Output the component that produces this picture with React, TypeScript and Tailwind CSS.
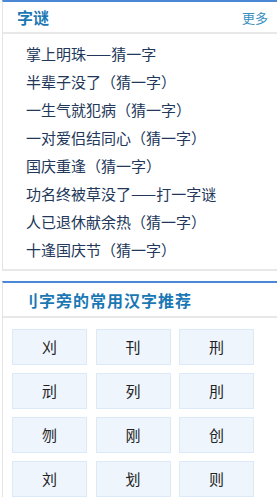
import React from "react";

const riddles = [
  "掌上明珠——猜一字",
  "半辈子没了（猜一字）",
  "一生气就犯病（猜一字）",
  "一对爱侣结同心（猜一字）",
  "国庆重逢（猜一字）",
  "功名终被草没了——打一字谜",
  "人已退休献余热（猜一字）",
  "十逢国庆节（猜一字）",
];

const chars = ["刈", "刊", "刑", "刓", "列", "刖", "刎", "刚", "创", "刘", "划", "则"];

export default function App() {
  return (
    <div
      className="w-[277px] h-[500px] overflow-hidden bg-white pl-[2px]"
      style={{ fontFamily: '"Noto Sans CJK SC", "Noto Sans", sans-serif' }}
    >
      <div className="w-[290px] border-t-2 border-t-[#4a88d6] border-l border-l-[#e3e3e3] border-b-2 border-b-[#e8e8e8]">
        <div className="h-[32px] flex items-center justify-between pl-[14px] pr-[24px] border-b-2 border-[#e8e8e8]">
          <span className="text-[16px] font-bold text-[#1b78b4] leading-none">字谜</span>
          <span className="text-[13px] text-[#3a8fc0] leading-none">更多</span>
        </div>
        <ul className="pt-[5px] pb-[6px] pl-[23px]">
          {riddles.map((r) => (
            <li key={r} className="h-[28px] flex items-center text-[15px] text-[#22375a] leading-none">
              {r}
            </li>
          ))}
        </ul>
      </div>
      <div className="mt-[10px] w-[290px] border-t-2 border-t-[#4a88d6] border-l border-l-[#e3e3e3]">
        <div className="h-[35px] flex items-center pl-[19px] border-b-2 border-[#e8e8e8]">
          <span className="text-[16px] font-bold text-[#1b78b4] leading-none tracking-[1px]">刂字旁的常用汉字推荐</span>
        </div>
        <div className="pt-[11px] pl-[9px] grid grid-cols-[75px_75px_75px] gap-x-[8.5px] gap-y-[8px]">
          {chars.map((c) => (
            <div
              key={c}
              className="h-[36px] flex items-center justify-center bg-[#eef5fd] border border-[#dce9f8] text-[15px] text-[#222]"
            >
              {c}
            </div>
          ))}
        </div>
      </div>
    </div>
  );
}
